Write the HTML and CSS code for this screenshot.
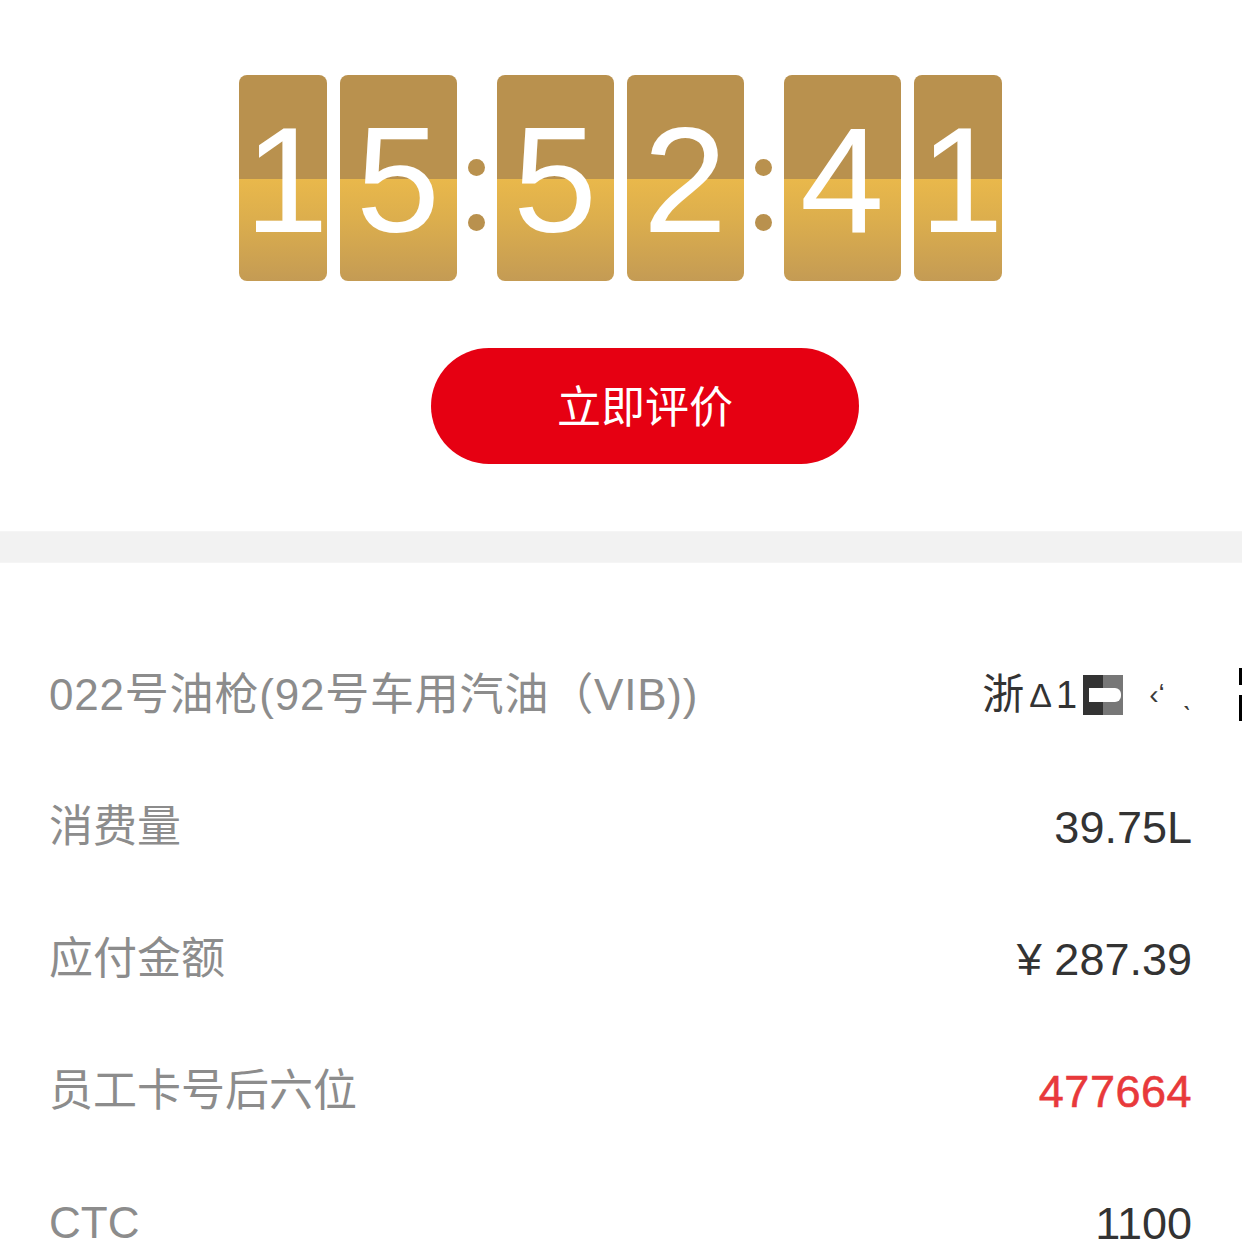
FILE: index.html
```html
<!DOCTYPE html>
<html lang="zh-CN">
<head>
<meta charset="utf-8">
<title>订单详情</title>
<link rel="stylesheet" href="styles.css">
</head>
<body>
<div class="page">
  <section class="top">
    <div class="clock">
      <div class="card narrow"><span>1</span></div>
      <div class="card"><span>5</span></div>
      <div class="colon"><i></i><i></i></div>
      <div class="card"><span>5</span></div>
      <div class="card"><span>2</span></div>
      <div class="colon"><i></i><i></i></div>
      <div class="card"><span>4</span></div>
      <div class="card narrow"><span>1</span></div>
    </div>
    <button class="rate-btn">立即评价</button>
  </section>
  <div class="band"></div>
  <section class="details">
    <div class="row">
      <span class="label wide">022号油枪(92号车用汽油（VIB))</span>
      <span class="value plate">浙<span class="pl-a">Δ</span><span class="pl-1">1</span><span class="mosaic"><b class="m1"></b><b class="m2"></b></span><span class="ghost"><i>‹ʻ</i><i>ˎ</i></span></span>
      <span class="edge-mark"><i></i><i></i></span>
    </div>
    <div class="row">
      <span class="label">消费量</span>
      <span class="value">39.75L</span>
    </div>
    <div class="row">
      <span class="label">应付金额</span>
      <span class="value">¥ 287.39</span>
    </div>
    <div class="row">
      <span class="label">员工卡号后六位</span>
      <span class="value red">477664</span>
    </div>
    <div class="row">
      <span class="label">CTC</span>
      <span class="value">1100</span>
    </div>
  </section>
</div>
</body>
</html>
```
FILE: styles.css
```css
* { box-sizing: border-box; }
html, body { margin: 0; padding: 0; background: #fff; }
body {
  font-family: "Liberation Sans", "Noto Sans CJK SC", sans-serif;
  width: 1242px;
  height: 1242px;
  overflow: hidden;
}
.page { display: flex; flex-direction: column; }

.top {
  display: flex;
  flex-direction: column;
  align-items: center;
  padding-top: 75px;
  padding-bottom: 67px;
}
.clock {
  display: flex;
  align-items: flex-start;
  gap: 13px;
  margin-right: 2px;
}
.card {
  width: 117px;
  height: 206px;
  border-radius: 8px;
  background: linear-gradient(to bottom,
    #b9914e 0%, #b9914e 50.5%,
    #e9b84b 50.5%, #dcae4d 70%, #c49b54 100%);
  display: flex;
  align-items: center;
  justify-content: center;
  color: #fff;
  font-family: "Liberation Sans", sans-serif;
  font-size: 151px;
  line-height: 1;
}
.card span { display: block; margin-top: 2px; }
.card.narrow { width: 88px; padding-left: 8px; }
.colon {
  width: 14px;
  display: flex;
  flex-direction: column;
  align-items: center;
  padding-top: 84px;
  gap: 38px;
}
.colon i {
  display: block;
  width: 17px;
  height: 17px;
  border-radius: 50%;
  background: #b9914e;
  flex: none;
}
.rate-btn {
  margin-top: 67px;
  margin-left: 48px;
  width: 428px;
  height: 116px;
  border: none;
  border-radius: 58px;
  background: #e60012;
  color: #fff;
  font-family: "Noto Sans CJK SC", sans-serif;
  font-size: 44px;
  padding: 0 0 4px 0;
  display: flex;
  align-items: center;
  justify-content: center;
}

.band {
  height: 32px;
  background: #f2f2f2;
  border-top: 1px solid #f5f5f5;
  border-bottom: 1px solid #f5f5f5;
}

.details {
  padding-top: 66px;
  display: flex;
  flex-direction: column;
}
.row {
  position: relative;
  height: 132px;
  display: flex;
  align-items: center;
  justify-content: space-between;
  padding: 0 50px 0 49px;
}
.label {
  font-size: 44px;
  color: #8c8c8c;
  line-height: 1;
}
.label.wide { letter-spacing: 0.8px; }
.value {
  font-size: 45px;
  color: #333;
  line-height: 1;
}
.value.red {
  color: #e8393b;
  letter-spacing: 0.5px;
  -webkit-text-stroke: 0.6px #e8393b;
}

.plate {
  display: flex;
  align-items: center;
  font-size: 42px;
  color: #333;
}
.pl-a { font-size: 34px; margin: 0 4px 0 5px; }
.pl-1 { font-size: 38px; }
.mosaic {
  display: flex;
  position: relative;
  margin-left: 6px;
  height: 40px;
}
.mosaic b { display: block; width: 20px; height: 40px; }
.mosaic .m1 { background: #333; }
.mosaic .m2 { background: #777; }
.mosaic::after {
  content: "";
  position: absolute;
  left: 6px;
  right: 2px;
  top: 13px;
  height: 14px;
  background: #fff;
  border-radius: 0 6px 6px 0;
}
.ghost {
  display: flex;
  align-items: center;
  gap: 18px;
  margin-left: 26px;
  font-size: 28px;
  color: #3a3a3a;
}
.ghost i { font-style: normal; }
.edge-mark {
  position: absolute;
  right: 0;
  top: 39px;
  display: flex;
  flex-direction: column;
  gap: 10px;
}
.edge-mark i { display: block; width: 3px; height: 17px; background: #000; }
.edge-mark i + i { height: 26px; }
```
